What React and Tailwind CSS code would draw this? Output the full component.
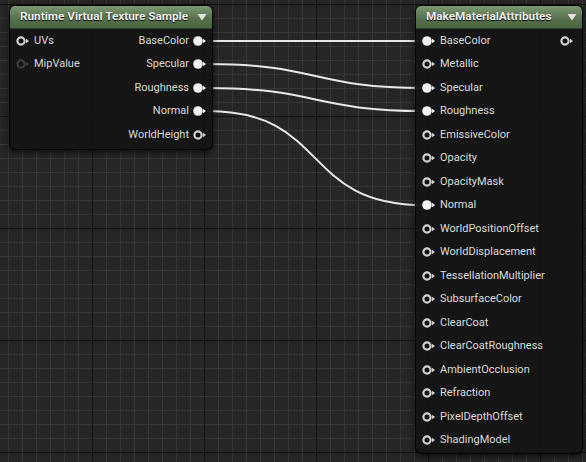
import React from 'react'

const leftInputs = [
  { name: 'UVs', state: 'open' },
  { name: 'MipValue', state: 'dim' }
]

const leftOutputs = [
  { name: 'BaseColor', state: 'linked' },
  { name: 'Specular', state: 'linked' },
  { name: 'Roughness', state: 'linked' },
  { name: 'Normal', state: 'linked' },
  { name: 'WorldHeight', state: 'open' }
]

const attributeInputs = [
  { name: 'BaseColor', state: 'linked' },
  { name: 'Metallic', state: 'open' },
  { name: 'Specular', state: 'linked' },
  { name: 'Roughness', state: 'linked' },
  { name: 'EmissiveColor', state: 'open' },
  { name: 'Opacity', state: 'open' },
  { name: 'OpacityMask', state: 'open' },
  { name: 'Normal', state: 'linked' },
  { name: 'WorldPositionOffset', state: 'open' },
  { name: 'WorldDisplacement', state: 'open' },
  { name: 'TessellationMultiplier', state: 'open' },
  { name: 'SubsurfaceColor', state: 'open' },
  { name: 'ClearCoat', state: 'open' },
  { name: 'ClearCoatRoughness', state: 'open' },
  { name: 'AmbientOcclusion', state: 'open' },
  { name: 'Refraction', state: 'open' },
  { name: 'PixelDepthOffset', state: 'open' },
  { name: 'ShadingModel', state: 'open' }
]

// wires from the texture sample outputs into the attributes node
const wires = [
  'M207,41 L424,41',
  'M207,64 C318,64 313,88 424,88',
  'M207,88 C318,88 313,111 424,111',
  'M207,111 C330,111 300,205 424,205'
]

function Pin({ state }) {
  const ring = state === 'dim' ? '#3c3c3c' : '#d2d2d2'
  const arrow = state === 'dim' ? '#3c3c3c' : state === 'linked' ? '#f2f2f2' : '#d2d2d2'
  return (
    <svg width="14" height="10" viewBox="0 0 14 10" className="shrink-0">
      {state === 'linked' ? (
        <circle cx="5" cy="5" r="4.8" fill="#f2f2f2" />
      ) : (
        <circle cx="5" cy="5" r="3.6" fill="#121212" stroke={ring} strokeWidth="2.2" />
      )}
      <path d="M10 2.8 L13 5 L10 7.2 Z" fill={arrow} />
    </svg>
  )
}

function Header({ title }) {
  return (
    <div className="flex h-[23px] items-center justify-between rounded-t-[5px] border-b border-black/60 bg-[linear-gradient(to_bottom,#7b9871,#55704b_60%,#4a6441)] pl-[10px] pr-[5px]">
      <span className="text-[11.75px] font-bold text-[#ececec] [text-shadow:0_1px_1px_#000]">
        {title}
      </span>
      <svg width="10" height="8" viewBox="0 0 10 8">
        <path d="M0.5 1 L9.5 1 L5 7.5 Z" fill="#e4e4e4" />
      </svg>
    </div>
  )
}

function App() {
  return (
    <div
      className="relative h-[462px] w-[586px] overflow-hidden bg-[#262626] bg-[linear-gradient(to_right,#121212_1px,transparent_1px),linear-gradient(to_bottom,#121212_1px,transparent_1px),linear-gradient(to_right,#363636_1px,transparent_1px),linear-gradient(to_bottom,#363636_1px,transparent_1px)] bg-[size:112px_112px,112px_112px,14px_14px,14px_14px] bg-[position:92px_0,0_116px,8px_0,0_4px]"
      style={{ fontFamily: 'Roboto, "Noto Sans", sans-serif' }}
    >
      <svg className="absolute inset-0" width="586" height="462">
        {wires.map((d) => (
          <path key={d} d={d} fill="none" stroke="#e8e8e8" strokeWidth="2" />
        ))}
      </svg>

      <div className="absolute left-[9px] top-[5px] w-[204px] rounded-[6px] border border-black/80 bg-[#141414]/95 pb-[2px] shadow-[0_2px_6px_rgba(0,0,0,0.7)]">
        <Header title="Runtime Virtual Texture Sample" />
        <div className="flex justify-between text-[11px] text-[#dadada]">
          <div className="flex flex-col pl-[6px]">
            {leftInputs.map((pin) => (
              <div key={pin.name} className="flex h-[23.5px] items-center gap-[4px]">
                <Pin state={pin.state} />
                <span>{pin.name}</span>
              </div>
            ))}
          </div>
          <div className="flex flex-col items-end pr-[5px]">
            {leftOutputs.map((pin) => (
              <div key={pin.name} className="flex h-[23.5px] items-center gap-[4px]">
                <span>{pin.name}</span>
                <Pin state={pin.state} />
              </div>
            ))}
          </div>
        </div>
      </div>

      <div className="absolute left-[415px] top-[5px] w-[168px] rounded-[6px] border border-black/80 bg-[#141414]/95 pb-[1px] shadow-[0_2px_6px_rgba(0,0,0,0.7)]">
        <Header title="MakeMaterialAttributes" />
        <div className="flex justify-between text-[11px] text-[#dadada]">
          <div className="flex flex-col pl-[6px]">
            {attributeInputs.map((pin) => (
              <div key={pin.name} className="flex h-[23.5px] items-center gap-[4px]">
                <Pin state={pin.state} />
                <span>{pin.name}</span>
              </div>
            ))}
          </div>
          <div className="flex h-[23.5px] items-center pr-[8px]">
            <Pin state="open" />
          </div>
        </div>
      </div>
    </div>
  )
}

export default App
